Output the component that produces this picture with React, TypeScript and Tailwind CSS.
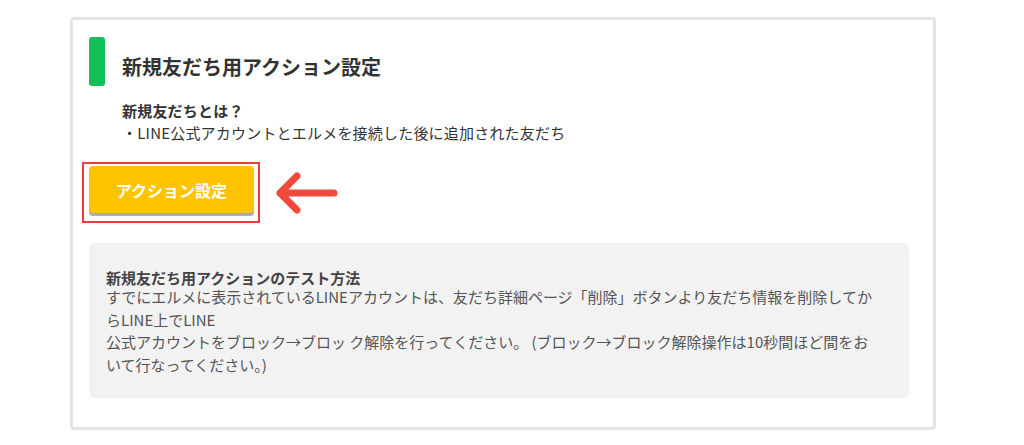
const font = { fontFamily: '"Noto Sans CJK JP", "Noto Sans", sans-serif' }

function ArrowLeft() {
  return (
    <svg width="64" height="44" viewBox="0 0 64 44" fill="none">
      <path
        d="M4 22 H58 M4 22 L21 5 M4 22 L21 39"
        stroke="#f04a3e"
        strokeWidth="7"
        strokeLinecap="round"
        strokeLinejoin="round"
      />
    </svg>
  )
}

export default function App() {
  return (
    <div className="min-h-screen w-[1024px] h-[445px] bg-white" style={font}>
      <div className="pt-[17px] pl-[70px]">
        <div className="w-[866px] border-[3px] border-[#e3e3e3] rounded-[4px] pl-[16px] pr-[24px] pt-[17px] pb-[29px]">
          {/* header */}
          <div className="flex gap-[17px]">
            <div className="w-[16px] h-[49px] rounded-[3px] bg-[#12c05a]" />
            <h1 className="mt-[16px] text-[20px] leading-[28px] font-bold text-[#333]">
              新規友だち用アクション設定
            </h1>
          </div>

          <div className="mt-[14px] pl-[33px] text-[15px] leading-[22px] text-[#333] tracking-[0.2px]">
            <p className="font-bold">新規友だちとは？</p>
            <p>・LINE公式アカウントとエルメを接続した後に追加された友だち</p>
          </div>

          <div className="mt-[18px] flex items-center gap-[16px]">
            <div className="-ml-[7px] border-2 border-[#ee3b3b] pl-[5px] pr-[4px] pt-[2px] pb-[8px]">
              <button className="w-[165px] h-[47px] rounded-[4px] bg-[#ffc300] text-white text-[16px] font-bold shadow-[0_3px_1px_#a8a8a8]">
                アクション設定
              </button>
            </div>
            <ArrowLeft />
          </div>

          <div className="mt-[20px] rounded-[6px] bg-[#f2f2f2] pl-[17px] pr-[12px] pt-[27px] pb-[22px] text-[15px] text-[#555]">
            <p className="font-bold leading-[16px] text-[#444]">新規友だち用アクションのテスト方法</p>
            <p className="leading-[22.5px] whitespace-nowrap">
              すでにエルメに表示されているLINEアカウントは、友だち詳細ページ「削除」ボタンより友だち情報を削除してか
              <br />
              らLINE上でLINE
              <br />
              公式アカウントをブロック→ブロッ ク解除を行ってください。 (ブロック→ブロック解除操作は10秒間ほど間をお
              <br />
              いて行なってください。)
            </p>
          </div>
        </div>
      </div>
    </div>
  )
}
